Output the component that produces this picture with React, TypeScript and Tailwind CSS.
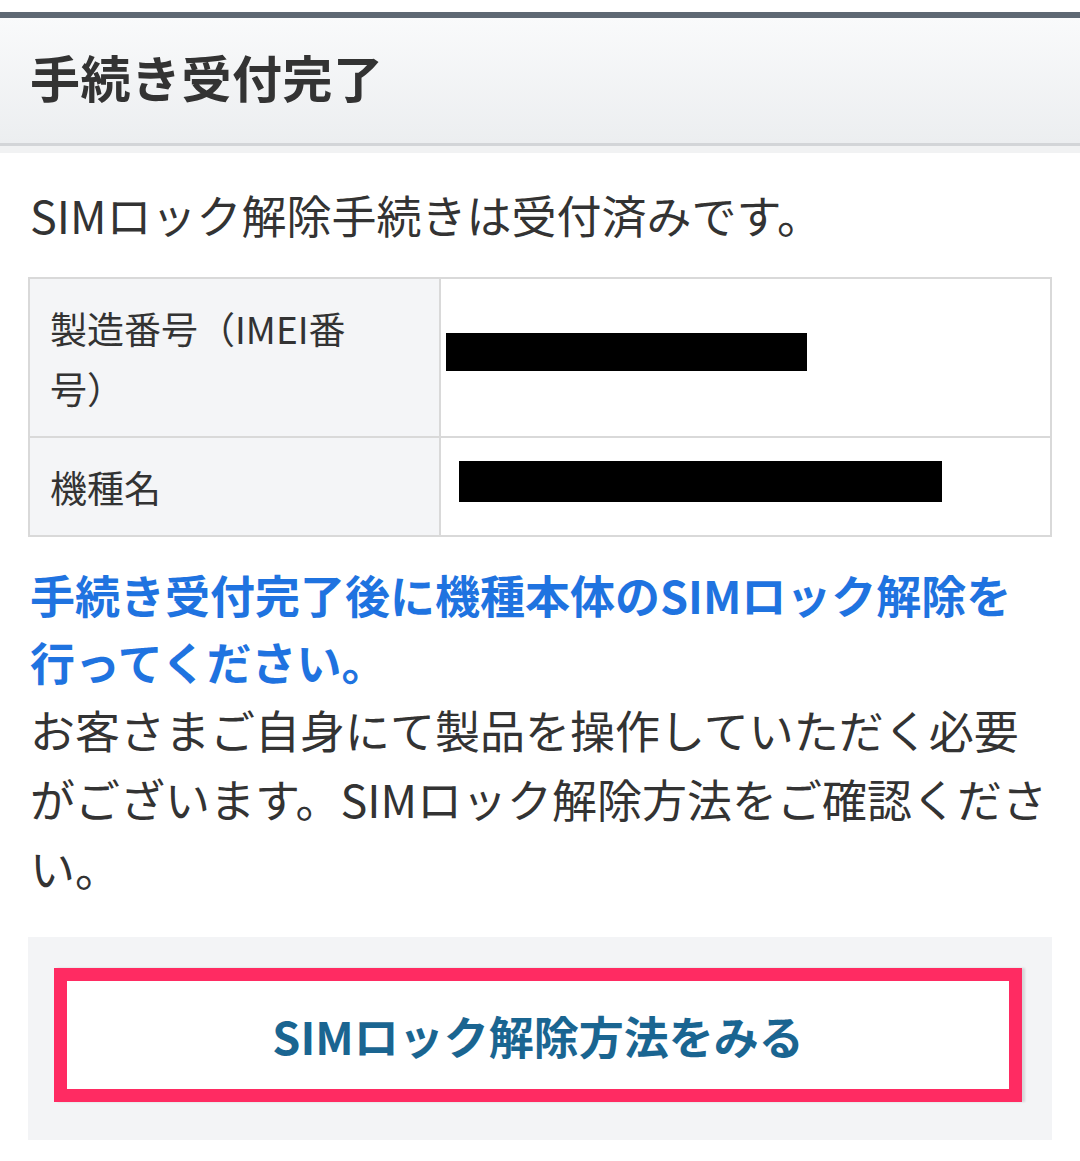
import React from 'react';

const font = { fontFamily: '"Noto Sans CJK JP", "Noto Sans", sans-serif' };

export default function App() {
  return (
    <div className="w-[1080px] h-[1161px] bg-white text-[#333333] overflow-hidden" style={font}>
      <div className="h-[12px] bg-white" />
      <div className="h-[6px] bg-[#5e6873]" />
      <div className="h-[125px] bg-gradient-to-b from-[#f9fafb] to-[#eceef0] flex items-center px-[30px] pb-[10px]">
        <h1 className="text-[50px] font-bold leading-none text-[#333333] tracking-[0.5px]">手続き受付完了</h1>
      </div>
      <div className="h-[3px] bg-[#d3d5d8]" />
      <div className="h-[7px] bg-[#f1f2f3]" />

      <div className="px-[28px]">
        <p className="mt-[36px] text-[45px] leading-[52px] pl-[2px]">SIMロック解除手続きは受付済みです。</p>

        <table className="mt-[36px] w-full border-collapse border-2 border-[#d9d9d9]">
          <tbody>
            <tr className="h-[159px]">
              <th className="w-[411px] bg-[#f4f5f7] border-2 border-[#d9d9d9] text-left font-normal align-middle pl-[20px] pr-[60px] text-[37px] leading-[60px]">
                製造番号（IMEI番号）
              </th>
              <td className="border-2 border-[#d9d9d9] align-middle pl-[5px] pb-[12px]">
                <div className="w-[361px] h-[38px] bg-black" />
              </td>
            </tr>
            <tr className="h-[99px]">
              <th className="bg-[#f4f5f7] border-2 border-[#d9d9d9] text-left font-normal align-middle pl-[20px] text-[37px] leading-[60px]">
                機種名
              </th>
              <td className="border-2 border-[#d9d9d9] align-middle pl-[18px] pb-[10px]">
                <div className="w-[483px] h-[41px] bg-black" />
              </td>
            </tr>
          </tbody>
        </table>

        <p className="mt-[24px] pl-[2px] pr-[20px] text-[#1f73e0] font-bold text-[45px] leading-[67px]">
          手続き受付完了後に機種本体のSIMロック解除を行ってください。
        </p>
        <p className="pl-[2px] text-[45px] leading-[69px]">
          お客さまご自身にて製品を操作していただく必要がございます。SIMロック解除方法をご確認ください。
        </p>

        <div className="mt-[35px] bg-[#f3f4f6] h-[203px] pt-[31px] pl-[26px] pr-[30px]">
          <div className="h-[134px] border-[13px] border-[#ff2b62] bg-white flex items-center justify-center shadow-[3px_0_2px_rgba(0,0,0,0.12)]">
            <span className="text-[#1a6591] font-bold text-[45px] leading-none">SIMロック解除方法をみる</span>
          </div>
        </div>
      </div>
    </div>
  );
}
